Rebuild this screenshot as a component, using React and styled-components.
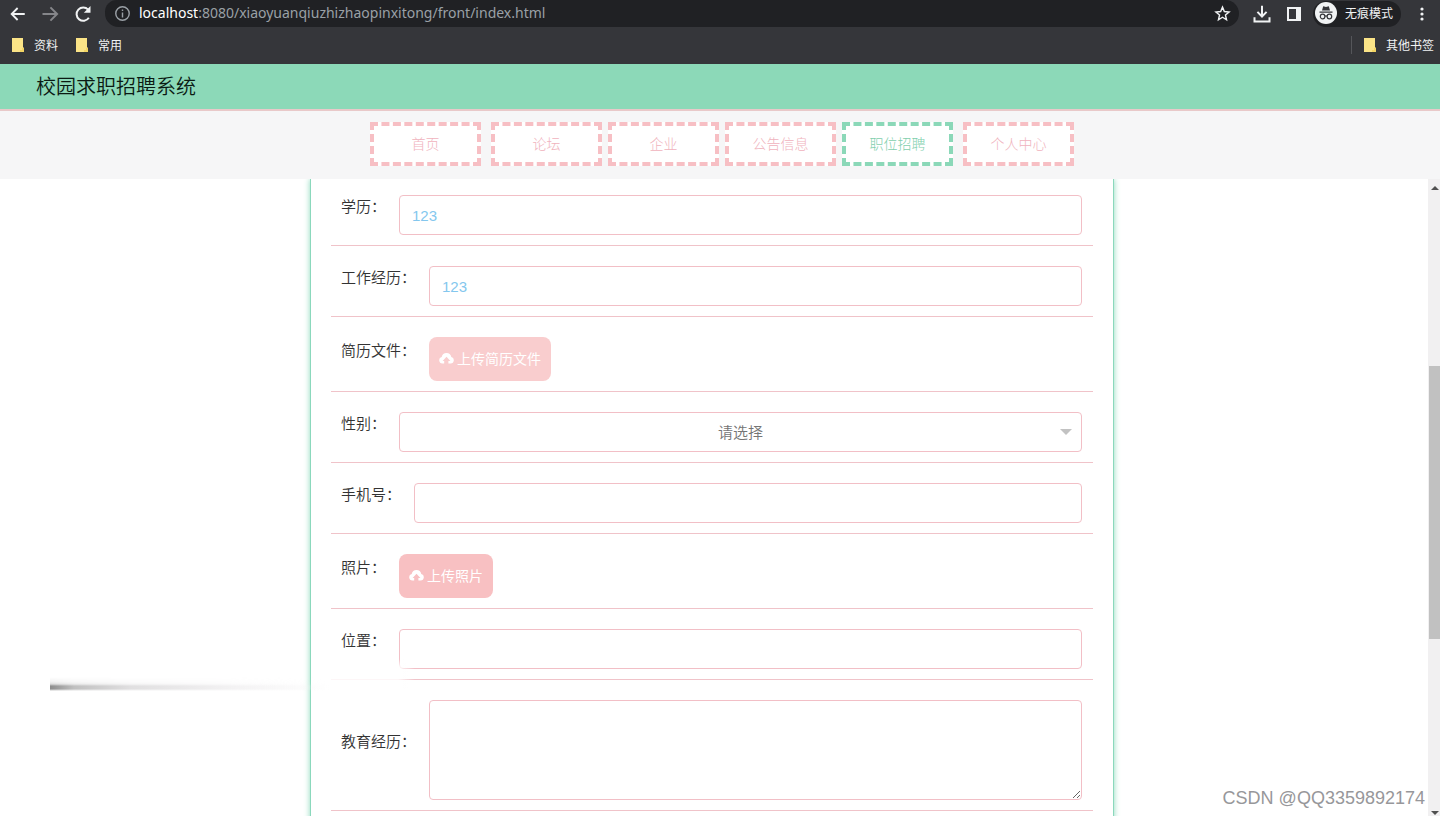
import React from "react";
import styled, { createGlobalStyle, css } from "styled-components";

const Global = createGlobalStyle`
  *, *::before, *::after { box-sizing: border-box; }
  body {
    margin: 0;
    background: #fff;
    color: #333;
    font-family: "Liberation Sans", "Noto Sans CJK SC", sans-serif;
  }
  button, input, select, textarea { font: inherit; }
  a { color: inherit; text-decoration: none; }
`;

const Screen = styled.div`
  position: relative;
  display: flex;
  flex-direction: column;
  height: 100vh;
  overflow: hidden;
`;

/* Browser chrome */
const Chrome = styled.div`
  flex: none;
  background: #35363a;
  color: #f1f3f4;
  font-family: "Noto Sans", "Noto Sans CJK SC", sans-serif;
`;

const Toolbar = styled.div`
  display: flex;
  align-items: center;
  height: 27px;
  padding: 0 6px 0 9px;
`;

const IconButton = styled.button`
  display: flex;
  align-items: center;
  justify-content: center;
  flex: none;
  width: ${(p) => p.$width || 32}px;
  height: 24px;
  padding: 0;
  border: 0;
  background: none;
  color: ${(p) => (p.$dim ? "#85868a" : "#f1f3f4")};
`;

const AddressBar = styled.div`
  display: flex;
  align-items: center;
  flex: 1;
  min-width: 0;
  height: 27px;
  margin: 0 7px 0 12px;
  padding: 0 0 1px 9px;
  border-radius: 12px 14px 14px 14px;
  background: #202124;
`;

const Url = styled.span`
  flex: 1;
  padding-left: 8px;
  overflow: hidden;
  white-space: nowrap;
  font-family: "Noto Sans", sans-serif;
  font-size: 14px;
  line-height: 20px;
  color: #9aa0a6;
  b { font-weight: 400; color: #fff; }
`;

const Profile = styled.button`
  display: flex;
  align-items: center;
  gap: 8px;
  height: 26px;
  margin: 0 9px 0 3px;
  padding: 0 8px 1px 2px;
  border: 0;
  border-radius: 13px;
  background: #202124;
  color: #f1f3f4;
  font-size: 12px;
  white-space: nowrap;
`;

const Bookmarks = styled.div`
  display: flex;
  align-items: center;
  gap: 18px;
  height: 37px;
  padding: 0 6px 2px 12px;
  font-size: 12px;
`;

const Bookmark = styled.a`
  display: flex;
  align-items: center;
  gap: 10px;
  ${(p) => p.$last && css`
    margin-left: auto;
    padding-left: 12px;
    border-left: 1px solid #55565a;
  `}
`;

/* Site header */
const SiteHeader = styled.header`
  flex: none;
  height: 47px;
  padding: 1px 36px 0;
  border-bottom: 2px solid #e9c9c9;
  background: #8cd9b8;
`;

const SiteTitle = styled.h1`
  margin: 0;
  font-size: 20px;
  font-weight: 350;
  line-height: 45px;
  color: #0b1a13;
`;

const Nav = styled.nav`
  display: flex;
  justify-content: center;
  flex: none;
  gap: 6px;
  height: 68px;
  padding: 11px 0 13px 4px;
  background: #f6f6f7;
`;

const NavLink = styled.a`
  display: flex;
  align-items: center;
  justify-content: center;
  width: 111px;
  padding-bottom: 2px;
  border: 4px dashed ${(p) => (p.$active ? "#8bd8b8" : "#f7bfc4")};
  background: #fff;
  color: ${(p) => (p.$active ? "#7fcfad" : "#f0b3bd")};
  font-size: 14px;
  font-weight: 300;
  &:first-child { margin-right: 4px; }
  &:last-child { margin-left: 4px; }
`;

/* Scrolling page area */
const Page = styled.div`
  position: relative;
  display: flex;
  flex: 1;
  min-height: 0;
`;

const Content = styled.main`
  flex: 1;
  min-width: 0;
  padding: 0 4px 0 0;
  overflow: hidden;
`;

const Panel = styled.form`
  max-width: 804px;
  margin: 0 auto;
  padding: 0 20px 40px;
  border: 1px solid #8bd8bc;
  border-width: 0 1px;
  box-shadow: 0 0 6px #8bd8bc;
`;

const Row = styled.div`
  display: flex;
  align-items: center;
  padding: 20px 11px 10px 10px;
  border-bottom: 1px solid #f0c3c9;
  &:first-child { padding-top: 16px; }
`;

const Label = styled.label`
  flex: none;
  padding: 0 13px 16px 0;
  font-size: 15px;
  font-weight: 350;
  line-height: 24px;
`;

const field = css`
  flex: 1;
  min-width: 0;
  width: 100%;
  height: 40px;
  padding: 0 12px;
  border: 1px solid #f2bfc6;
  border-radius: 4px;
  background: #fff;
  color: #84c7ee;
  font-size: 15px;
  outline: none;
`;

const Input = styled.input`${field}`;

const TextArea = styled.textarea`
  ${field}
  display: block;
  height: 100px;
  padding: 10px 12px;
  resize: vertical;
`;

const SelectWrap = styled.div`
  position: relative;
  display: flex;
  flex: 1;
  &::after {
    content: "";
    position: absolute;
    top: 17px;
    right: 10px;
    border: 6px solid transparent;
    border-top-color: #c2c2c2;
    pointer-events: none;
  }
`;

const Select = styled.select`
  ${field}
  appearance: none;
  color: #757575;
  font-weight: 350;
  text-align-last: center;
`;

const Upload = styled.button`
  display: flex;
  align-items: center;
  gap: 3px;
  height: 44px;
  padding: 0 10px 2px;
  border: 0;
  border-radius: 8px;
  background: ${(p) => (p.$faded ? "#f9cdce" : "#f8c0c2")};
  color: #fff;
  font-size: 14px;
`;

const Scrollbar = styled.div`
  display: flex;
  flex-direction: column;
  align-items: flex-end;
  flex: none;
  width: 12px;
  background: #f1f0f1;
`;

const Arrow = styled.span`
  flex: none;
  margin: ${(p) => (p.$down ? "6px 1px 1px 0" : "7px 1px 0 0")};
  border: 4px solid transparent;
  ${(p) => (p.$down
    ? "border-top-color: #505050; border-bottom: 0;"
    : "border-bottom-color: #505050; border-top: 0;")}
`;

const Track = styled.span`flex: ${(p) => p.$share};`;

const Thumb = styled.span`
  flex: 274;
  width: 11px;
  background: #c1c1c1;
`;

/* Soft grey trail crossing the left margin */
const Streak = styled.div`
  position: absolute;
  top: 498px;
  left: 50px;
  width: 360px;
  height: 14px;
  pointer-events: none;
  background: linear-gradient(90deg, #8c8c8c 0, #c0c0c0 24px, #e0dfe0 80px, #f3f2f3 180px, transparent 280px);
  mask-image: linear-gradient(transparent 0, rgba(0, 0, 0, 0.12) 35%, rgba(0, 0, 0, 0.3) 50%, #000 65%, #000 85%, transparent 100%);
`;

const Haze = styled.div`
  position: absolute;
  top: 480px;
  left: 331px;
  width: 84px;
  height: 30px;
  pointer-events: none;
  background: linear-gradient(90deg, rgba(255, 255, 255, 0.85) 80%, transparent);
  mask-image: linear-gradient(transparent, #000 24%);
`;

const Watermark = styled.span`
  position: absolute;
  right: 15px;
  bottom: 8px;
  font-size: 18px;
  line-height: 20px;
  color: #97979a;
  text-shadow: 0 0 1px #fff;
`;

const Svg = ({ size = 20, w, children, ...rest }) => (
  <svg width={w || size} height={size} viewBox="0 0 24 24" fill="none" stroke="currentColor"
    strokeWidth="2.4" aria-hidden="true" {...rest}>{children}</svg>
);

const Folder = () => (
  <svg width="12" height="14" viewBox="0 0 12 14" aria-hidden="true">
    <path d="M0 0h11v9l1 1v4H0z" fill="#fbe487" />
    <path d="M8 14v-2h2v-2h2v4z" fill="#f3d564" />
  </svg>
);

const CloudUpload = () => (
  <svg width="15" height="12" viewBox="0 0 15 12" aria-hidden="true">
    <path fill="currentColor" d="M5.2 11.5H3.4A3.3 3.3 0 0 1 2.7 5 4.9 4.9 0 0 1 12.3 5a3.3 3.3 0 0 1-.7 6.5H9.4V9h2L7.5 4.7 3.6 9h1.6z" />
  </svg>
);

const navItems = ["首页", "论坛", "企业", "公告信息", "职位招聘", "个人中心"];

const rows = [
  { id: "degree", label: "学历", type: "input", value: "123" },
  { id: "work", label: "工作经历", type: "input", value: "123" },
  { id: "resume", label: "简历文件", type: "upload", faded: true },
  { id: "gender", label: "性别", type: "select" },
  { id: "phone", label: "手机号", type: "input" },
  { id: "photo", label: "照片", type: "upload" },
  { id: "place", label: "位置", type: "input" },
  { id: "education", label: "教育经历", type: "textarea" },
];

function Control({ row }) {
  if (row.type === "upload") {
    return <Upload type="button" id={row.id} $faded={row.faded}><CloudUpload />上传{row.label}</Upload>;
  }
  if (row.type === "select") {
    return (
      <SelectWrap>
        <Select id={row.id} defaultValue="">
          <option value="">请选择</option>
          <option value="m">男</option>
          <option value="f">女</option>
        </Select>
      </SelectWrap>
    );
  }
  if (row.type === "textarea") return <TextArea id={row.id} />;
  return <Input id={row.id} type="text" defaultValue={row.value} />;
}

export default function App() {
  return (
    <Screen>
      <Global />
      <Chrome>
        <Toolbar>
          <IconButton $width={18} aria-label="后退">
            <Svg><path d="M21 12H4M11.5 4 3.5 12l8 8" /></Svg>
          </IconButton>
          <IconButton $width={46} $dim aria-label="前进">
            <Svg><path d="M3 12h17M12.5 4l8 8-8 8" /></Svg>
          </IconButton>
          <IconButton $width={20} aria-label="刷新">
            <Svg><path d="M19 16.5a8 8 0 1 1-.8-9.8" /><path d="M21 2.500v8h-8z" fill="currentColor" stroke="none" /></Svg>
          </IconButton>
          <AddressBar>
            <Svg size={17} color="#9aa0a6" strokeWidth="2"><circle cx="12" cy="12" r="9.5" /><path d="M12 10.500v7M12 6.500v2" /></Svg>
            <Url><b>localhost</b>:8080/xiaoyuanqiuzhizhaopinxitong/front/index.html</Url>
            <IconButton aria-label="收藏">
              <Svg size={17} strokeWidth="2"><path d="m12 3 2.600 6.200 6.700.6-5.100 4.400 1.500 6.600L12 17.300l-5.700 3.500 1.500-6.600-5.100-4.400 6.700-.6z" /></Svg>
            </IconButton>
          </AddressBar>
          <IconButton aria-label="下载">
            <Svg><path d="M12 2v13M6.5 9.500 12 15l5.500-5.500M3 16v5h18v-5" /></Svg>
          </IconButton>
          <IconButton aria-label="侧边栏">
            <svg width="14" height="14" viewBox="0 0 14 14" aria-hidden="true">
              <path d="M0 0h14v14H0zM2 2v10h7V2z" fill="currentColor" fillRule="evenodd" />
            </svg>
          </IconButton>
          <Profile>
            <svg width="22" height="22" viewBox="0 0 22 22" aria-hidden="true">
              <circle cx="11" cy="11" r="11" fill="#f1f3f4" />
              <path d="M7 8.500 8.200 4.200 11 5l2.800-.8L15 8.500zM4.500 9.500h13v1.200h-13z" fill="#35363a" />
              <g fill="none" stroke="#35363a" strokeWidth="1.2"><circle cx="7.6" cy="14.5" r="2.3" /><circle cx="14.4" cy="14.5" r="2.3" /><path d="M9.900 14.200q1.100-.8 2.200 0" /></g>
            </svg>
            无痕模式
          </Profile>
          <IconButton $width={24} aria-label="菜单">
            <svg width="4" height="14" viewBox="0 0 4 14" fill="currentColor" aria-hidden="true">
              <circle cx="2" cy="2" r="1.6" /><circle cx="2" cy="7" r="1.6" /><circle cx="2" cy="12" r="1.6" />
            </svg>
          </IconButton>
        </Toolbar>
        <Bookmarks>
          <Bookmark href="#"><Folder />资料</Bookmark>
          <Bookmark href="#"><Folder />常用</Bookmark>
          <Bookmark href="#" $last><Folder />其他书签</Bookmark>
        </Bookmarks>
      </Chrome>

      <SiteHeader><SiteTitle>校园求职招聘系统</SiteTitle></SiteHeader>
      <Nav>
        {navItems.map((name) => (
          <NavLink key={name} href="#" $active={name === "职位招聘"}>{name}</NavLink>
        ))}
      </Nav>

      <Page>
        <Content>
          <Panel>
            {rows.map((row) => (
              <Row key={row.id}>
                <Label htmlFor={row.id}>{row.label}：</Label>
                <Control row={row} />
              </Row>
            ))}
          </Panel>
        </Content>
        <Scrollbar aria-hidden="true">
          <Arrow />
          <Track $share={176} />
          <Thumb />
          <Track $share={166} />
          <Arrow $down />
        </Scrollbar>
        <Haze />
        <Streak />
      </Page>
      <Watermark>CSDN @QQ3359892174</Watermark>
    </Screen>
  );
}
